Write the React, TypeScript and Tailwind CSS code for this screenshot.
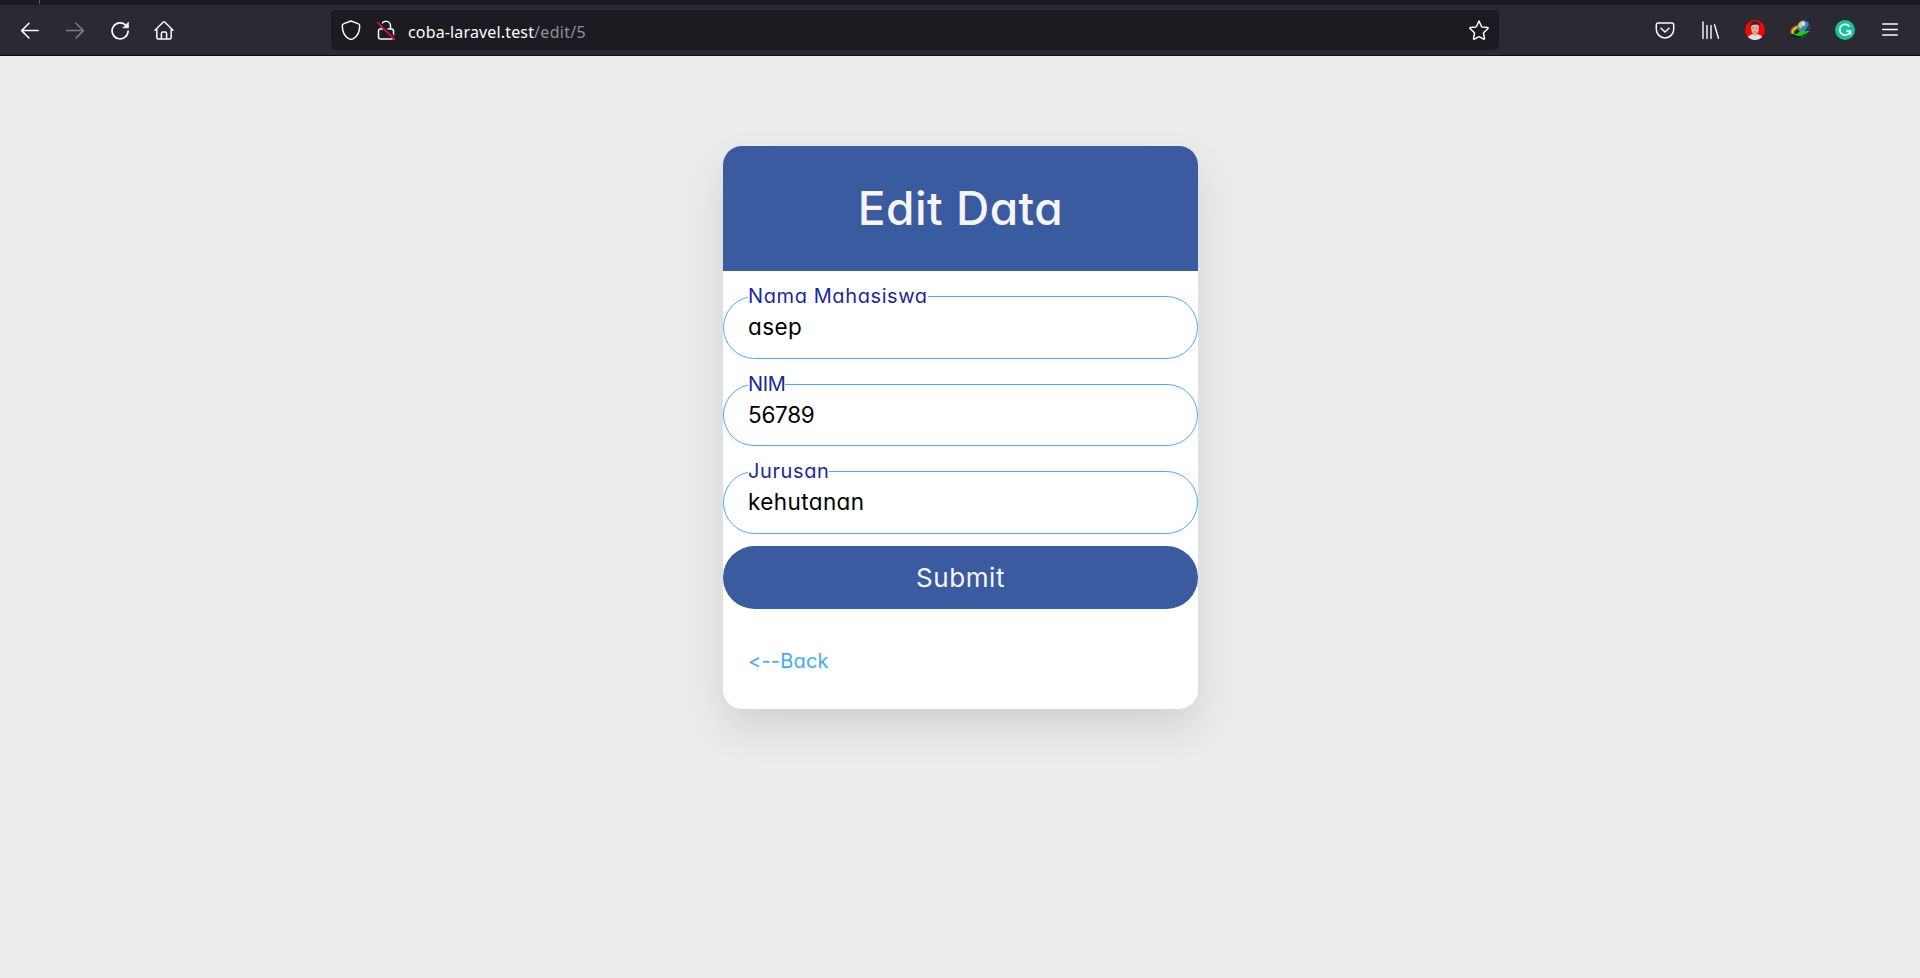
import React from "react";

const stroke = {
  fill: "none",
  stroke: "#fbfbfe",
  strokeWidth: 1.5,
  strokeLinecap: "round" as const,
  strokeLinejoin: "round" as const,
};

function Icon({ children, className = "" }: { children: React.ReactNode; className?: string }) {
  return (
    <svg viewBox="0 0 20 20" className={`h-5 w-5 shrink-0 ${className}`} {...stroke}>
      {children}
    </svg>
  );
}

function Toolbar() {
  return (
    <header className="shrink-0 bg-[#2b2a33]">
      <div className="flex h-[5px] bg-[#1c1b22]">
        <div className="ml-[39px] h-[4px] w-px bg-[#5b5a63]" />
      </div>
      <div className="flex h-[51px] items-center border-b border-[#0c0c0d]">
        <nav className="flex w-[331px] items-center gap-[25px] pl-5">
          <Icon><path d="M18.3 10.6H1.8M9 3.2 1.6 10.6 9 18" /></Icon>
          <Icon className="opacity-40"><path d="M1.7 10.6h16.5M11 3.2l7.4 7.4L11 18" /></Icon>
          <Icon>
            <path d="M18.1 11.2A8 8 0 1 1 15.6 5" strokeWidth="1.7" />
            <path d="M18.4 2.6v5.2h-5.2z" fill="#fbfbfe" strokeWidth=".8" />
          </Icon>
          <Icon className="-ml-px">
            <path d="M1 10.2 9.3 2q.7-.6 1.4 0L19 10.2M2.8 8.8v8.7q0 1.5 1.5 1.5h11.4q1.5 0 1.5-1.5V8.8M7.4 19v-5.5q0-1.6 1.5-1.6h2.2q1.5 0 1.5 1.6V19" />
          </Icon>
        </nav>
        <div className="flex h-10 w-[1168px] items-center rounded-[5px] bg-[#1c1b22] px-[10px]">
          <Icon><path d="M10 1 17 3.6q1.7.6 1.7 2.2C18.7 12 16.5 16.6 12 18.8q-2 1-4 0C3.5 16.6 1.3 12 1.3 5.8Q1.3 4.2 3 3.6z" /></Icon>
          <Icon className="ml-[15px]">
            <path d="M5.5 9V5.7a4.5 4.5 0 0 1 9 0V9M4.5 9h11q2 0 2 2v6q0 2-2 2h-11q-2 0-2-2v-6q0-2 2-2z" />
            <path d="M2.7 2.5 19.1 18.9" stroke="#1c1b22" strokeWidth="3.6" />
            <path d="M2 3 18.4 19.4" stroke="#e3103f" strokeWidth="1.7" />
          </Icon>
          <p className="ml-3 pt-[3px] font-['Noto_Sans',sans-serif] text-[16px] leading-5 whitespace-nowrap text-[#8f8f98]">
            <span className="tracking-[0.15px] text-[#fbfbfe]">coba-laravel.test</span>
            <span className="tracking-[0.3px]">/edit/5</span>
          </p>
          <Icon className="ml-auto">
            <path d="m10 1 2.4 5.3q.2.5.8.6l5.6.7q.6.4.2.9l-4.2 4q-.4.4-.3.9l1 5.1q-.2.8-.9.6l-4-2.3q-.6-.3-1.2 0l-4 2.3q-.8.2-.9-.6l1-5.1q.1-.5-.3-.9L1 8.5q-.4-.5.2-.9l5.6-.7q.6-.1.8-.6z" />
          </Icon>
        </div>
        <div className="ml-auto flex items-center gap-[25px] pr-5">
          <Icon>
            <path d="M3.2 3h13.6q1.9 0 1.9 1.9v4.3a8.7 8.7 0 0 1-17.4 0V4.9Q1.3 3 3.2 3zM6 8.2l4 3.8 4-3.8" />
          </Icon>
          <Icon><path d="M3 2v16.5M7 5.5v13M11 5.5v13M14.500 4.8l4 13.5" strokeWidth="1.4" /></Icon>
          <svg viewBox="0 0 20 20" className="h-5 w-5">
            <circle cx="10" cy="10" r="10" fill="#f90606" />
            <path d="M2.8 17q1.2-2.2 5-3l2.3 1.5L12.5 14q3.5.8 4.7 3A10 10 0 0 1 2.8 17z" fill="#e6e1e0" />
            <path d="M6 6.5Q6 3 10 3t4 3.5c.2 4-1.7 8.3-4 8.8-2.300-.5-4.200-4.800-4-8.800z" fill="#dcb3a2" />
            <path d="M5.6 7.8Q4.6 1.3 10 1.2q5.7 0 4.5 6.6-.3-2.6-1.300-3-3.200-.4-6 .1-1.200.4-1.600 2.900z" fill="#2c2428" />
            <path d="M7.5 8h1.600M11 8h1.600M8.800 12h2.500" stroke="#8a5a4e" strokeWidth=".7" />
          </svg>
          <svg viewBox="0 0 20 20" className="h-5 w-5" fill="none">
            <path d="M8.5 4.600C2.500 5.500-.5 10 1 13.500 2 16.500 6.500 18.500 12 17.500L9 8z" fill="#111a12" />
            <path d="M9 5.300C3.500 6 .3 9.500 1 13" stroke="#d8401f" strokeWidth="1.500" />
            <path d="M9 6.800C4.500 7.500 1.800 10.300 2.400 13.800" stroke="#f2d21f" strokeWidth="1.900" />
            <path d="M9 8.400C6 9 3.700 11 4 14.500" stroke="#2fae3a" strokeWidth="1.400" />
            <circle cx="13.600" cy="6.500" r="6" fill="#4580cc" />
            <path d="M7.900 5.500Q9.200 1.500 13.500.5q1.800 1.500.5 4l-3.500 4.300z" fill="#d5cd6a" />
            <circle cx="13.500" cy="4" r="1.800" fill="#d5e9f0" />
            <path d="M18.800 3.800q1.800 4.500-2 7.400l-4.300.6q5-2.200 6.300-8z" fill="#1b2f63" />
            <path d="M3.500 14q3.500.6 6-2.200L8.500 10.300l11.500 1-8.800 7.700.2-3.300q-4.400 1.300-7.900-1.700z" fill="#24c41c" />
            <path d="m11.400 15.700 8.600-4.400-8.800 7.700z" fill="#0f5213" />
          </svg>
          <svg viewBox="0 0 20 20" className="h-5 w-5">
            <circle cx="10" cy="10" r="10" fill="#15c39a" />
            <path d="M14.6 6.7A5.400 5.400 0 1 0 15.200 11.500M11.300 11h4.200v4" fill="none" stroke="#fff" strokeWidth="1.7" />
          </svg>
          <Icon><path d="M2.700 4h14.600M2.700 9.500h14.600M2.700 15h14.600" /></Icon>
        </div>
      </div>
    </header>
  );
}

const fields = [
  { label: "Nama Mahasiswa", value: "asep", labelTracking: "tracking-[0.6px]", valueTracking: "tracking-[0.4px]" },
  { label: "NIM", value: "56789", labelTracking: "tracking-[-0.4px]", valueTracking: "tracking-[-0.3px]" },
  { label: "Jurusan", value: "kehutanan", labelTracking: "tracking-[0.6px]", valueTracking: "tracking-[0.4px]" },
];

export default function App() {
  return (
    <div className="flex h-[978px] flex-col overflow-hidden bg-[#ececec]">
      <Toolbar />
      <main className="flex justify-center pt-[90px] pl-px font-['Inter',sans-serif] [font-feature-settings:'cv11','calt'_0]">
        <section className="h-[563px] w-[475px] rounded-[19px] bg-white shadow-[0_19px_38px_rgba(0,0,0,0.115)]">
          <h1 className="flex h-[125px] items-center justify-center rounded-t-[19px] bg-[#3b5ba0] pb-px text-[46px] font-medium tracking-[0.5px] text-[#f5f5f5]">
            <span>Edit Data</span>
          </h1>
          <form className="flex flex-col pt-[25px]">
            {fields.map((f) => (
              <div
                key={f.label}
                className="mb-[25px] flex h-[62.5px] flex-col items-start rounded-full border border-[#45aef8] pl-6 last-of-type:mb-[12.5px]"
              >
                <label className={`-mt-[13px] h-[25px] bg-white text-[20px] leading-[25px] whitespace-nowrap text-[#1a2a9c] ${f.labelTracking}`}>
                  {f.label}
                </label>
                <span className={`mt-[3px] text-[22.5px] leading-[30px] text-black ${f.valueTracking}`}>{f.value}</span>
              </div>
            ))}
            <button type="button" className="h-[62.5px] rounded-full bg-[#3b5ba0] pt-px text-[26px] tracking-[0.6px] text-[#f5f5f5]">
              <span>Submit</span>
            </button>
          </form>
          <a className="mt-[37px] ml-[25px] inline-block text-[20px] leading-[30px] tracking-[0.2px] text-[#42acfa]">&lt;--Back</a>
        </section>
      </main>
    </div>
  );
}
